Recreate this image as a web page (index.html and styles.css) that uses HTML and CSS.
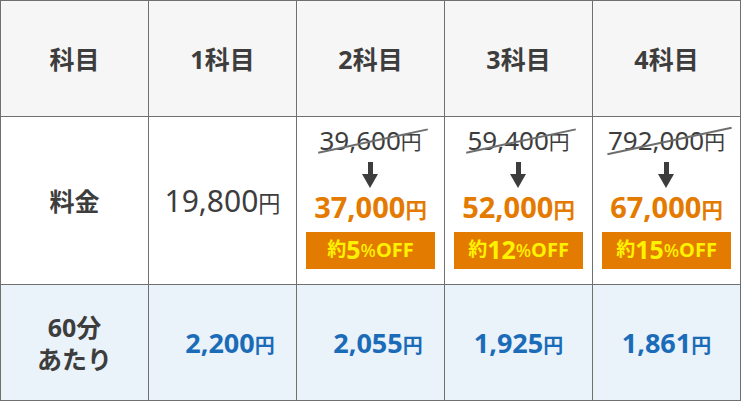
FILE: index.html
```html
<!DOCTYPE html>
<html lang="ja">
<head>
<meta charset="utf-8">
<link rel="stylesheet" href="styles.css">
</head>
<body>
<table class="price-table">
  <tr class="row-head">
    <th>科目</th>
    <th>1科目</th>
    <th>2科目</th>
    <th>3科目</th>
    <th>4科目</th>
  </tr>
  <tr class="row-price">
    <th>料金</th>
    <td><span class="plain">19,800<small>円</small></span></td>
    <td>
      <div class="deal">
        <span class="old">39,600<small>円</small></span>
        <span class="arrow"></span>
        <span class="new">37,000<small>円</small></span>
        <span class="badge"><span class="b-s">約</span><span class="b-n">5</span><span class="b-p">%</span><span class="b-o">OFF</span></span>
      </div>
    </td>
    <td>
      <div class="deal">
        <span class="old">59,400<small>円</small></span>
        <span class="arrow"></span>
        <span class="new">52,000<small>円</small></span>
        <span class="badge"><span class="b-s">約</span><span class="b-n">12</span><span class="b-p">%</span><span class="b-o">OFF</span></span>
      </div>
    </td>
    <td>
      <div class="deal">
        <span class="old">792,000<small>円</small></span>
        <span class="arrow"></span>
        <span class="new">67,000<small>円</small></span>
        <span class="badge"><span class="b-s">約</span><span class="b-n">15</span><span class="b-p">%</span><span class="b-o">OFF</span></span>
      </div>
    </td>
  </tr>
  <tr class="row-unit">
    <th>60分<br>あたり</th>
    <td class="shift"><span class="unit">2,200<small>円</small></span></td>
    <td class="shift"><span class="unit">2,055<small>円</small></span></td>
    <td><span class="unit">1,925<small>円</small></span></td>
    <td><span class="unit">1,861<small>円</small></span></td>
  </tr>
</table>
</body>
</html>
```

FILE: styles.css
```css
html, body {
  margin: 0;
  padding: 0;
  background: #ffffff;
}
body {
  font-family: "Noto Sans", "Noto Sans CJK JP", sans-serif;
  color: #3d3d3d;
}
.price-table {
  border-collapse: collapse;
  width: 741px;
  table-layout: fixed;
}
.price-table th,
.price-table td {
  border: 1px solid #707070;
  text-align: center;
  vertical-align: middle;
  padding: 0;
}
.price-table th {
  font-weight: 700;
  font-size: 25px;
  line-height: 32px;
}
.row-head th {
  height: 115px;
  background: #f6f6f6;
}
.row-price th,
.row-price td {
  height: 167px;
  background: #ffffff;
}
.row-unit th,
.row-unit td {
  height: 115px;
  background: #eaf2fa;
}
.price-table td.shift {
  padding-left: 15px;
}
small {
  font-size: 0.74em;
}
.plain {
  font-size: 30px;
  font-weight: 400;
  color: #3d3d3d;
}
.deal {
  display: flex;
  flex-direction: column;
  align-items: center;
  padding: 0 9px;
  margin-top: -6px;
}
.old {
  position: relative;
  font-size: 26px;
  line-height: 28px;
  color: #3d3d3d;
}
.old small {
  font-size: 0.8em;
}
.old::after {
  content: "";
  position: absolute;
  left: -2px;
  right: -8px;
  top: 14px;
  height: 2px;
  background: #6e6e6e;
  transform: rotate(-12deg);
}
.arrow {
  position: relative;
  width: 17px;
  height: 27px;
  margin-top: 6px;
}
.arrow::before {
  content: "";
  position: absolute;
  left: 6px;
  top: 0;
  width: 5px;
  height: 14px;
  background: #3d3d3d;
}
.arrow::after {
  content: "";
  position: absolute;
  left: 0;
  top: 12px;
  border-left: 8.5px solid transparent;
  border-right: 8.5px solid transparent;
  border-top: 14px solid #3d3d3d;
}
.new {
  font-size: 29px;
  font-weight: 700;
  line-height: 36px;
  color: #e47a00;
}
.badge {
  align-self: stretch;
  margin-top: 4px;
  height: 37px;
  background: #e27b00;
  color: #fff200;
  font-weight: 700;
  display: flex;
  align-items: center;
  justify-content: center;
  line-height: 1;
  padding-bottom: 2px;
  box-sizing: border-box;
}
.b-s { font-size: 19px; }
.b-n { font-size: 25px; }
.b-p { font-size: 18px; font-weight: 500; }
.b-o { font-size: 20px; }
.unit {
  font-size: 27px;
  font-weight: 700;
  color: #1a6bb8;
}
```
